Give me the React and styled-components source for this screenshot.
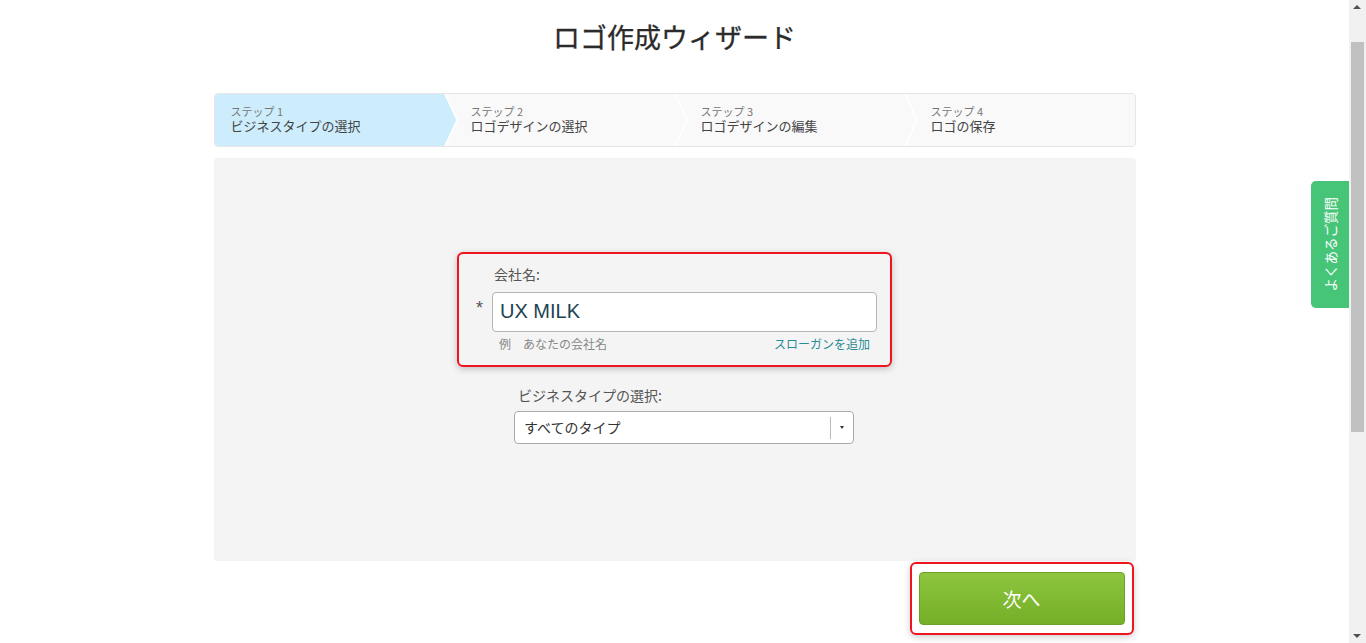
import React from 'react'
import styled, { createGlobalStyle } from 'styled-components'

const GlobalStyle = createGlobalStyle`
  html, body {
    margin: 0;
    padding: 0;
    height: 100%;
    overflow: hidden;
    background: #fff;
    font-family: "Liberation Sans", "Noto Sans CJK JP", sans-serif;
  }
`

const Page = styled.div`
  width: calc(100% - 17px);
  min-height: 100vh;
  font-family: "Noto Sans CJK JP", "Liberation Sans", sans-serif;
  color: #333;
`

const Title = styled.h1`
  margin: 0;
  padding-top: 17px;
  height: 40px;
  line-height: 40px;
  text-align: center;
  font-size: 27px;
  font-weight: 400;
  color: #2b2b2b;
  -webkit-text-stroke: 0.3px #2b2b2b;
`

const Container = styled.div`
  width: 922px;
  margin: 36px auto 0;
`

const Stepper = styled.div`
  display: grid;
  grid-template-columns: repeat(4, 1fr);
  height: 54px;
  box-sizing: border-box;
  border: 1px solid #e6e6e6;
  border-radius: 4px;
  background: #f9f9f9;
`

const Step = styled.div`
  position: relative;
  display: flex;
  flex-direction: column;
  justify-content: center;
  padding-left: ${p => (p.$first ? '16px' : '26px')};
  padding-bottom: 3px;
  background: ${p => (p.$active ? '#cdedfc' : 'transparent')};
  border-radius: ${p => (p.$first ? '3px 0 0 3px' : '0')};
`

const StepNum = styled.span`
  font-size: 11px;
  line-height: 13px;
  color: #777;
`

const StepLabel = styled.span`
  font-size: 13px;
  line-height: 15px;
  color: #444;
`

const Chevron = styled.svg`
  position: absolute;
  top: 0;
  left: 100%;
  margin-left: -2px;
  z-index: 2;
`

const Panel = styled.div`
  margin-top: 11px;
  height: 403px;
  box-sizing: border-box;
  padding-top: 94px;
  background: #f4f4f4;
  border-radius: 3px;
`

const NameBox = styled.div`
  width: 435px;
  margin: 0 auto;
  box-sizing: border-box;
  border: 2px solid #f0141e;
  border-radius: 6px;
  box-shadow: 0 2px 7px rgba(0, 0, 0, 0.22);
  padding: 10px 13px 13px 0;
  display: grid;
  grid-template-columns: 33px 385px;
`

const FieldLabel = styled.label`
  display: block;
  font-size: 14px;
  line-height: 20px;
  color: #555;
  margin-bottom: ${p => p.$gap || '8px'};
  padding-left: ${p => p.$indent || '0'};
`

const Asterisk = styled.span`
  grid-column: 1;
  text-align: right;
  padding-right: 9px;
  font-family: "Liberation Sans", Arial, sans-serif;
  font-size: 18px;
  line-height: 20px;
  padding-top: 6px;
  color: #555;
`

const TextInput = styled.div`
  height: 40px;
  box-sizing: border-box;
  border: 1px solid #b5b5b5;
  border-radius: 4px;
  background: #fff;
  padding-left: 7px;
  padding-bottom: 2px;
  display: flex;
  align-items: center;
  font-family: "Liberation Sans", Arial, sans-serif;
  font-size: 20px;
  color: #1e4350;
`

const HintRow = styled.div`
  grid-column: 2;
  display: flex;
  justify-content: space-between;
  padding: 0 7px;
  margin-top: 4px;
  font-size: 12px;
  line-height: 16px;
`

const Hint = styled.span`
  color: #888;
`

const SloganLink = styled.a`
  color: #2a8c95;
  text-decoration: none;
`

const TypeSection = styled.div`
  width: 405px;
  margin: 18px auto 0;
  padding-left: 19px;
  box-sizing: border-box;
`

const TypeInner = styled.div`
  width: 340px;
  margin: 0 auto;
`

const Select = styled.div`
  height: 33px;
  box-sizing: border-box;
  border: 1px solid #aaa;
  border-radius: 4px;
  background: #fff;
  display: flex;
  align-items: center;
  font-size: 14px;
  color: #333;
`

const SelectText = styled.span`
  flex: 1;
  padding-left: 9px;
  padding-bottom: 1px;
`

const SelectToggle = styled.span`
  width: 22px;
  height: 22px;
  border-left: 1px solid #bbb;
  display: flex;
  align-items: center;
  justify-content: center;
`

const Caret = styled.span`
  width: 0;
  height: 0;
  border-left: 2.5px solid transparent;
  border-right: 2.5px solid transparent;
  border-top: 3px solid #333;
`

const ButtonRow = styled.div`
  display: flex;
  justify-content: flex-end;
  padding-right: 2px;
  margin-top: 1px;
`

const ButtonFrame = styled.div`
  border: 2px solid #f0141e;
  border-radius: 6px;
  box-shadow: 0 2px 7px rgba(0, 0, 0, 0.2);
  padding: 8px 7px;
`

const NextButton = styled.button`
  width: 206px;
  height: 53px;
  border: 1px solid #6d9f2b;
  border-radius: 4px;
  background: linear-gradient(#8dc53e, #75ae27);
  color: #fff;
  font-family: "Noto Sans CJK JP", sans-serif;
  font-size: 19px;
  cursor: pointer;
`

const FaqTab = styled.div`
  position: fixed;
  top: 181px;
  right: 17px;
  width: 38px;
  height: 127px;
  background: #46c477;
  border-radius: 5px 0 0 5px;
  display: flex;
  align-items: center;
  justify-content: center;
`

const FaqText = styled.span`
  writing-mode: vertical-rl;
  text-orientation: sideways;
  transform: rotate(180deg);
  color: #fff;
  font-size: 13.5px;
`

const ScrollTrack = styled.div`
  position: fixed;
  top: 0;
  right: 0;
  width: 17px;
  height: 100vh;
  background: #f1f1f1;
`

const ScrollArrow = styled.span`
  position: absolute;
  left: 4px;
  ${p => (p.$down ? 'bottom: 5px;' : 'top: 5px;')}
  width: 0;
  height: 0;
  border-left: 4px solid transparent;
  border-right: 4px solid transparent;
  ${p => (p.$down ? 'border-top: 4px solid #505050;' : 'border-bottom: 4px solid #505050;')}
`

const ScrollThumb = styled.div`
  position: absolute;
  top: 42px;
  left: 2px;
  width: 13px;
  height: 390px;
  background: #c1c1c1;
`

const steps = [
  { num: 'ステップ 1', label: 'ビジネスタイプの選択' },
  { num: 'ステップ 2', label: 'ロゴデザインの選択' },
  { num: 'ステップ 3', label: 'ロゴデザインの編集' },
  { num: 'ステップ 4', label: 'ロゴの保存' },
]

function StepArrow({ active }) {
  return (
    <Chevron width="16" height="52" viewBox="0 0 16 52">
      {active && <polygon points="0,0 2,0 14,26 2,52 0,52" fill="#cdedfc" />}
      <polyline points="2,0 14,26 2,52" fill="none" stroke="#fff" strokeWidth="1.5" />
    </Chevron>
  )
}

function App() {
  return (
    <Page>
      <GlobalStyle />
      <Title>ロゴ作成ウィザード</Title>
      <Container>
        <Stepper>
          {steps.map((s, i) => (
            <Step key={s.num} $first={i === 0} $active={i === 0}>
              <StepNum>{s.num}</StepNum>
              <StepLabel>{s.label}</StepLabel>
              {i < steps.length - 1 && <StepArrow active={i === 0} />}
            </Step>
          ))}
        </Stepper>

        <Panel>
          <NameBox>
            <div />
            <FieldLabel $indent="2px">会社名:</FieldLabel>
            <Asterisk>*</Asterisk>
            <TextInput>UX MILK</TextInput>
            <HintRow>
              <Hint>例　あなたの会社名</Hint>
              <SloganLink href="#">スローガンを追加</SloganLink>
            </HintRow>
          </NameBox>

          <TypeSection>
            <TypeInner>
              <FieldLabel $gap="6px" $indent="4px">ビジネスタイプの選択:</FieldLabel>
              <Select>
                <SelectText>すべてのタイプ</SelectText>
                <SelectToggle>
                  <Caret />
                </SelectToggle>
              </Select>
            </TypeInner>
          </TypeSection>
        </Panel>

        <ButtonRow>
          <ButtonFrame>
            <NextButton>次へ</NextButton>
          </ButtonFrame>
        </ButtonRow>
      </Container>

      <FaqTab>
        <FaqText>よくあるご質問</FaqText>
      </FaqTab>

      <ScrollTrack>
        <ScrollArrow />
        <ScrollThumb />
        <ScrollArrow $down />
      </ScrollTrack>
    </Page>
  )
}

export default App
